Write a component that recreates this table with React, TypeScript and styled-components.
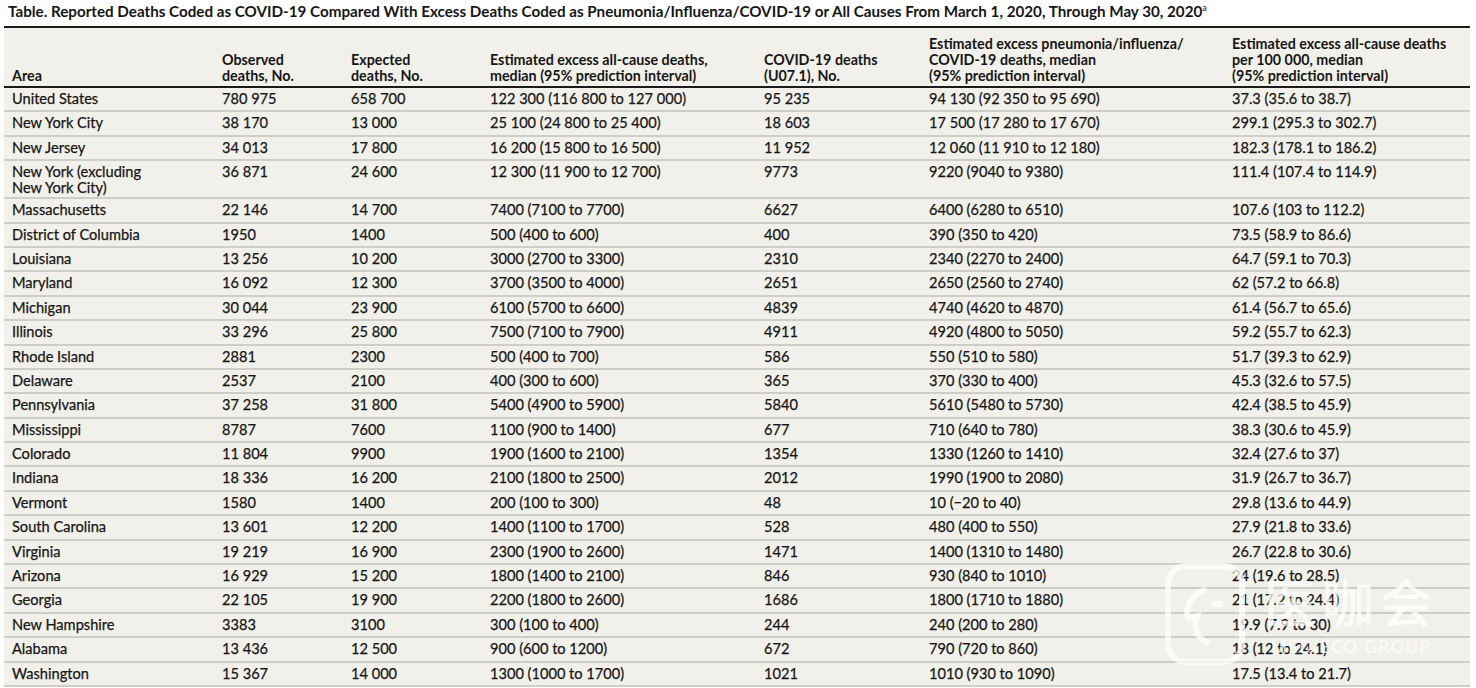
import React from "react";
import styled, { createGlobalStyle } from "styled-components";

const GlobalStyle = createGlobalStyle`
  body {
    margin: 0;
    background: #ffffff;
    font-family: Lato, "Noto Sans", sans-serif;
    color: #161616;
  }
`;

const Page = styled.div`
  position: relative;
  width: 1476px;
  height: 688px;
  overflow: hidden;
  padding: 0 6px 0 4px;
  box-sizing: border-box;
`;

const Title = styled.h1`
  margin: 0;
  padding: 1px 0 0 4px;
  height: 26px;
  box-sizing: border-box;
  font-size: 15.2px;
  font-weight: 700;
  line-height: 20px;
  white-space: nowrap;

  sup {
    font-size: 9px;
    font-weight: 400;
    vertical-align: 6px;
    line-height: 0;
  }
`;

const Table = styled.table`
  width: 100%;
  border-collapse: collapse;
  background: #f2f0ea;
  border-top: 2px solid #1b1b1b;
  table-layout: fixed;
`;

const HeadCell = styled.th<{ $w: number }>`
  width: ${(p) => p.$w}px;
  text-align: left;
  vertical-align: bottom;
  font-size: 14.3px;
  font-weight: 700;
  line-height: 16px;
  padding: 0 8px 2px 8px;
  height: 60px;
  box-sizing: border-box;
  border-bottom: 2px solid #1b1b1b;
  white-space: pre-line;
`;

const Row = styled.tr<{ $tall?: boolean }>`
  height: ${(p) => (p.$tall ? "38px" : "24.4px")};
  border-bottom: 2px solid #cfcdc8;
`;

const Cell = styled.td`
  font-size: 14.6px;
  font-weight: 400;
  line-height: 16px;
  padding: 3px 8px 1px 8px;
  vertical-align: top;
  white-space: pre-line;
  -webkit-text-stroke: 0.25px #161616;
`;

const Watermark = styled.div`
  position: absolute;
  left: 1164px;
  top: 562px;
  display: flex;
  align-items: center;
  gap: 18px;
  pointer-events: none;
  opacity: 0.75;
`;

const MarkText = styled.div`
  display: flex;
  flex-direction: column;
  align-items: center;
  color: #ffffff;
`;

const MarkHan = styled.div`
  font-family: "Noto Sans CJK SC", sans-serif;
  font-size: 52px;
  line-height: 60px;
  letter-spacing: 6px;
  font-weight: 500;
`;

const MarkLatin = styled.div`
  font-family: "Noto Sans", sans-serif;
  font-size: 18px;
  line-height: 22px;
  letter-spacing: 1px;
  margin-top: 4px;
`;

const columns = [
  { w: 210, label: "Area" },
  { w: 129, label: "Observed\ndeaths, No." },
  { w: 139, label: "Expected\ndeaths, No." },
  { w: 274, label: "Estimated excess all-cause deaths,\nmedian (95% prediction interval)" },
  { w: 165, label: "COVID-19 deaths\n(U07.1), No." },
  { w: 303, label: "Estimated excess pneumonia/influenza/\nCOVID-19 deaths, median\n(95% prediction interval)" },
  { w: 246, label: "Estimated excess all-cause deaths\nper 100\u00a0000, median\n(95% prediction interval)" },
];

const t = "\u00a0";

const rows: string[][] = [
  ["United States", `780${t}975`, `658${t}700`, `122${t}300 (116${t}800 to 127${t}000)`, `95${t}235`, `94${t}130 (92${t}350 to 95${t}690)`, "37.3 (35.6 to 38.7)"],
  ["New York City", `38${t}170`, `13${t}000`, `25${t}100 (24${t}800 to 25${t}400)`, `18${t}603`, `17${t}500 (17${t}280 to 17${t}670)`, "299.1 (295.3 to 302.7)"],
  ["New Jersey", `34${t}013`, `17${t}800`, `16${t}200 (15${t}800 to 16${t}500)`, `11${t}952`, `12${t}060 (11${t}910 to 12${t}180)`, "182.3 (178.1 to 186.2)"],
  ["New York (excluding\nNew York City)", `36${t}871`, `24${t}600`, `12${t}300 (11${t}900 to 12${t}700)`, "9773", "9220 (9040 to 9380)", "111.4 (107.4 to 114.9)"],
  ["Massachusetts", `22${t}146`, `14${t}700`, "7400 (7100 to 7700)", "6627", "6400 (6280 to 6510)", "107.6 (103 to 112.2)"],
  ["District of Columbia", "1950", "1400", "500 (400 to 600)", "400", "390 (350 to 420)", "73.5 (58.9 to 86.6)"],
  ["Louisiana", `13${t}256`, `10${t}200`, "3000 (2700 to 3300)", "2310", "2340 (2270 to 2400)", "64.7 (59.1 to 70.3)"],
  ["Maryland", `16${t}092`, `12${t}300`, "3700 (3500 to 4000)", "2651", "2650 (2560 to 2740)", "62 (57.2 to 66.8)"],
  ["Michigan", `30${t}044`, `23${t}900`, "6100 (5700 to 6600)", "4839", "4740 (4620 to 4870)", "61.4 (56.7 to 65.6)"],
  ["Illinois", `33${t}296`, `25${t}800`, "7500 (7100 to 7900)", "4911", "4920 (4800 to 5050)", "59.2 (55.7 to 62.3)"],
  ["Rhode Island", "2881", "2300", "500 (400 to 700)", "586", "550 (510 to 580)", "51.7 (39.3 to 62.9)"],
  ["Delaware", "2537", "2100", "400 (300 to 600)", "365", "370 (330 to 400)", "45.3 (32.6 to 57.5)"],
  ["Pennsylvania", `37${t}258`, `31${t}800`, "5400 (4900 to 5900)", "5840", "5610 (5480 to 5730)", "42.4 (38.5 to 45.9)"],
  ["Mississippi", "8787", "7600", "1100 (900 to 1400)", "677", "710 (640 to 780)", "38.3 (30.6 to 45.9)"],
  ["Colorado", `11${t}804`, "9900", "1900 (1600 to 2100)", "1354", "1330 (1260 to 1410)", "32.4 (27.6 to 37)"],
  ["Indiana", `18${t}336`, `16${t}200`, "2100 (1800 to 2500)", "2012", "1990 (1900 to 2080)", "31.9 (26.7 to 36.7)"],
  ["Vermont", "1580", "1400", "200 (100 to 300)", "48", "10 (\u221220 to 40)", "29.8 (13.6 to 44.9)"],
  ["South Carolina", `13${t}601`, `12${t}200`, "1400 (1100 to 1700)", "528", "480 (400 to 550)", "27.9 (21.8 to 33.6)"],
  ["Virginia", `19${t}219`, `16${t}900`, "2300 (1900 to 2600)", "1471", "1400 (1310 to 1480)", "26.7 (22.8 to 30.6)"],
  ["Arizona", `16${t}929`, `15${t}200`, "1800 (1400 to 2100)", "846", "930 (840 to 1010)", "24 (19.6 to 28.5)"],
  ["Georgia", `22${t}105`, `19${t}900`, "2200 (1800 to 2600)", "1686", "1800 (1710 to 1880)", "21 (17.2 to 24.4)"],
  ["New Hampshire", "3383", "3100", "300 (100 to 400)", "244", "240 (200 to 280)", "19.9 (7.9 to 30)"],
  ["Alabama", `13${t}436`, `12${t}500`, "900 (600 to 1200)", "672", "790 (720 to 860)", "18 (12 to 24.1)"],
  ["Washington", `15${t}367`, `14${t}000`, "1300 (1000 to 1700)", "1021", "1010 (930 to 1090)", "17.5 (13.4 to 21.7)"],
];

const LogoMark = () => (
  <svg width="82" height="104" viewBox="0 0 82 104" fill="none" stroke="#ffffff" strokeWidth="6" strokeLinecap="round">
    <rect x="4" y="4" width="74" height="96" rx="18" />
    <path d="M40 28 C27 34 21 45 24 56 L33 54 C29 66 33 76 43 80" />
    <path d="M50 42 L56 42" />
  </svg>
);

export default function App() {
  return (
    <Page>
      <GlobalStyle />
      <Title>
        Table. Reported Deaths Coded as COVID-19 Compared With Excess Deaths Coded as Pneumonia/Influenza/COVID-19 or All Causes From March 1, 2020, Through May 30, 2020<sup>a</sup>
      </Title>
      <Table>
        <thead>
          <tr>
            {columns.map((c) => (
              <HeadCell key={c.label} $w={c.w}>
                {c.label}
              </HeadCell>
            ))}
          </tr>
        </thead>
        <tbody>
          {rows.map((r) => (
            <Row key={r[0]} $tall={r[0].includes("\n")}>
              {r.map((v, i) => (
                <Cell key={i}>{v}</Cell>
              ))}
            </Row>
          ))}
        </tbody>
      </Table>
      <Watermark>
        <LogoMark />
        <MarkText>
          <MarkHan>医咖会</MarkHan>
          <MarkLatin>MEDIECO GROUP</MarkLatin>
        </MarkText>
      </Watermark>
    </Page>
  );
}
